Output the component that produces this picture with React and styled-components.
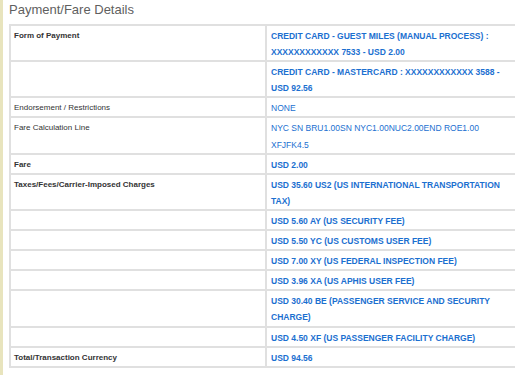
import styled, { createGlobalStyle } from "styled-components";

const GlobalStyle = createGlobalStyle`
  html, body {
    margin: 0;
    padding: 0;
    background: #fff;
    overflow: hidden;
  }
`;

const Page = styled.div`
  display: flex;
  width: 515px;
  height: 375px;
  overflow: hidden;
  font-family: "Liberation Sans", Arial, Helvetica, sans-serif;
`;

// beige margin rule down the left side
const Rail = styled.div`
  flex: 0 0 3px;
  background-color: #e8e4bd;
`;

const Content = styled.div`
  flex: none;
  padding-left: 6px;
  padding-top: 2px;
`;

const Heading = styled.h2`
  margin: 0 0 6px;
  font-size: 13px;
  line-height: 16px;
  font-weight: normal;
  color: #5f5f5f;
`;

const Table = styled.table`
  width: 517px;
  table-layout: fixed;
  border-collapse: collapse;
  border: 2px solid #e0e0e0;
`;

const Row = styled.tr`
  border-top: 2px solid #e0e0e0;
`;

const Label = styled.td`
  width: 247px;
  padding: 2px 4px 0 3px;
  vertical-align: top;
  font-size: 8px;
  line-height: 16.1px;
  color: #333;
  font-weight: ${(p) => (p.$bold ? "bold" : "normal")};
  border-right: 2px solid #e0e0e0;
`;

const Value = styled.td`
  padding: 2px 14px 0 4px;
  vertical-align: top;
  font-size: 8.5px;
  line-height: 16.1px;
  color: #1b6fd0;
  font-weight: ${(p) => (p.$bold ? "bold" : "normal")};
`;

const rows = [
  { label: "Form of Payment", labelBold: true, value: "CREDIT CARD - GUEST MILES (MANUAL PROCESS) : XXXXXXXXXXXX 7533 - USD 2.00", bold: true },
  { label: "", value: "CREDIT CARD - MASTERCARD : XXXXXXXXXXXX 3588 - USD 92.56", bold: true },
  { label: "Endorsement / Restrictions", value: "NONE" },
  { label: "Fare Calculation Line", value: "NYC SN BRU1.00SN NYC1.00NUC2.00END ROE1.00 XFJFK4.5" },
  { label: "Fare", labelBold: true, value: "USD 2.00", bold: true },
  { label: "Taxes/Fees/Carrier-Imposed Charges", labelBold: true, value: "USD 35.60 US2 (US INTERNATIONAL TRANSPORTATION TAX)", bold: true },
  { label: "", value: "USD 5.60 AY (US SECURITY FEE)", bold: true },
  { label: "", value: "USD 5.50 YC (US CUSTOMS USER FEE)", bold: true },
  { label: "", value: "USD 7.00 XY (US FEDERAL INSPECTION FEE)", bold: true },
  { label: "", value: "USD 3.96 XA (US APHIS USER FEE)", bold: true },
  { label: "", value: "USD 30.40 BE (PASSENGER SERVICE AND SECURITY CHARGE)", bold: true },
  { label: "", value: "USD 4.50 XF (US PASSENGER FACILITY CHARGE)", bold: true },
  { label: "Total/Transaction Currency", labelBold: true, value: "USD 94.56", bold: true },
];

export default function App() {
  return (
    <>
      <GlobalStyle />
      <Page>
        <Rail />
        <Content>
          <Heading>Payment/Fare Details</Heading>
          <Table>
            <tbody>
              {rows.map((r, i) => (
                <Row key={i}>
                  <Label $bold={r.labelBold}>{r.label}</Label>
                  <Value $bold={r.bold}>{r.value}</Value>
                </Row>
              ))}
            </tbody>
          </Table>
        </Content>
      </Page>
    </>
  );
}
